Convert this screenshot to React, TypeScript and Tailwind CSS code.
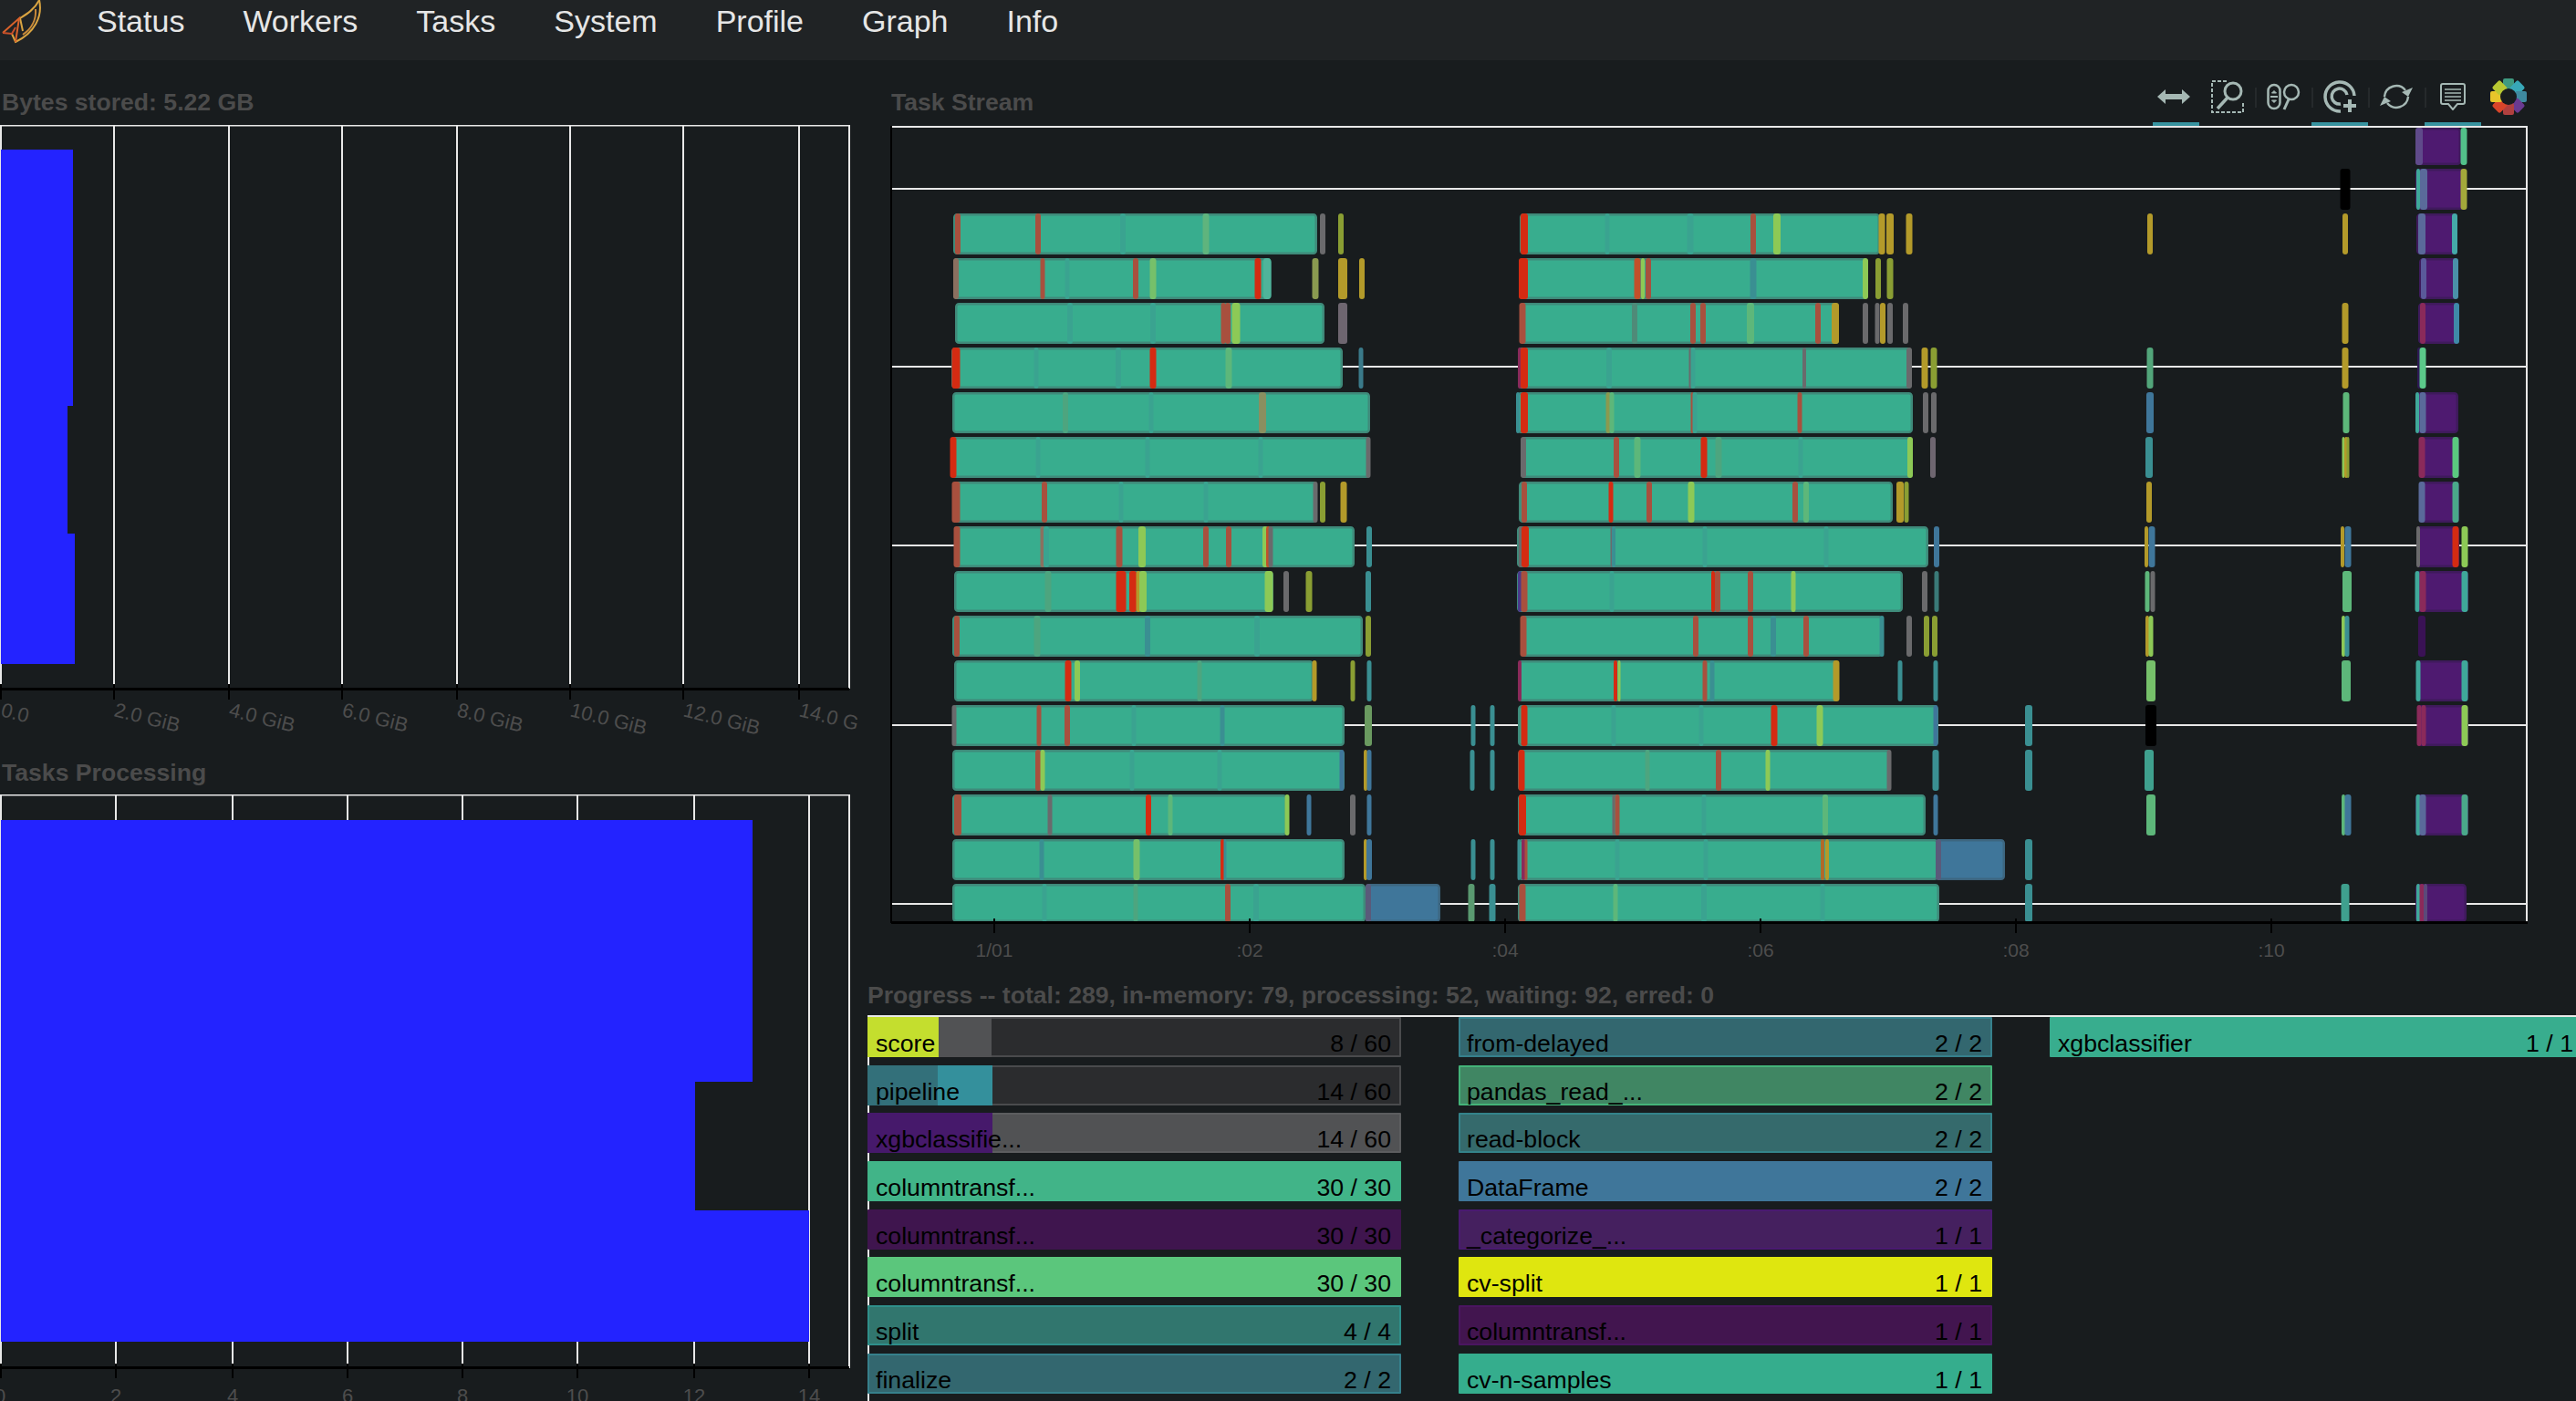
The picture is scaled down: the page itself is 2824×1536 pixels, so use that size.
import type { ReactNode } from 'react';

type Strip = [number, number, string];
type Bar = [number, number, string?];
type Row = { bars: Bar[]; strips: Strip[] };

const R = '#d42b12';
const M = '#a8503e';
const S = '#3aa390';
const T = '#3a8f92';
const G = '#5db77a';
const L = '#8dc956';
const Y = '#b39a2a';
const O = '#8a9e33';
const A = '#6a6a6c';
const B = '#3f769a';
const C = '#8a2a5a';
const V = '#5a6a9a';
const P = '#4e1a70';

const ROW_TOPS = Array.from({ length: 18 }, (_, i) => 136 + i * 49);

const rows: Row[] = [
  { bars: [[2648, 2698, P]], strips: [[2652, 8, '#5f4a8a'], [2701, 7, '#52c08a']] },
  { bars: [[2648, 2702, P]], strips: [[2571, 11, '#000000'], [2651, 4, '#3fa89a'], [2657, 8, V], [2701, 7, '#a3a83a']] },
  {
    bars: [[1045, 1444], [1666, 2061], [2649, 2693, P]],
    strips: [[1050, 6, M], [1138, 6, M], [1231, 6, S], [1322, 7, '#5fb47d'], [1450, 6, A], [1470, 6, O], [1671, 8, R], [1762, 5, S], [1853, 7, S], [1922, 6, M], [1948, 8, L], [2063, 7, Y], [2072, 8, Y], [2093, 7, Y], [2357, 6, Y], [2571, 6, Y], [2655, 8, V], [2691, 6, '#45a9a8']],
  },
  {
    bars: [[1045, 1394], [1665, 2048], [2652, 2695, P]],
    strips: [[1048, 6, '#8a7060'], [1143, 5, M], [1170, 5, S], [1245, 6, M], [1264, 7, '#76c06a'], [1379, 7, R], [1389, 8, '#4fb49a'], [1442, 7, '#8a9a50'], [1472, 10, Y], [1493, 6, Y], [1670, 10, R], [1795, 7, '#c2502a'], [1801, 4, L], [1807, 6, M], [1922, 7, T], [2045, 6, L], [2059, 6, O], [2072, 7, O], [2657, 6, '#5a5a9a'], [2692, 6, '#4a90a8']],
  },
  {
    bars: [[1047, 1452], [1666, 2016], [2651, 2696, P]],
    strips: [[1173, 6, S], [1264, 6, S], [1341, 5, M], [1346, 6, M], [1355, 9, L], [1472, 10, '#6e6670'], [1669, 7, M], [1792, 6, '#4f8a78'], [1856, 6, M], [1867, 6, M], [1919, 8, G], [1993, 6, M], [2012, 8, Y], [2045, 6, A], [2058, 5, A], [2064, 6, Y], [2072, 6, A], [2089, 6, A], [2571, 7, Y], [2656, 6, C], [2693, 6, '#3f8aa8']],
  },
  {
    bars: [[1043, 1472], [1664, 2096]],
    strips: [[1048, 9, R], [1136, 5, S], [1226, 6, S], [1264, 7, R], [1347, 7, G], [1492, 5, '#3a7a8a'], [1666, 4, C], [1671, 8, R], [1764, 6, S], [1853, 3, A], [1856, 5, S], [1978, 4, A], [2093, 6, A], [2110, 7, Y], [2120, 7, O], [2357, 7, '#52a57a'], [2571, 7, Y], [2652, 4, '#2e1a55'], [2656, 7, '#5bc98a']],
  },
  {
    bars: [[1044, 1502], [1663, 2097], [2648, 2695, P]],
    strips: [[1168, 6, '#4da57f'], [1262, 5, S], [1384, 8, '#8a8f60'], [1664, 4, T], [1671, 8, R], [1763, 5, '#8a9a50'], [1767, 5, G], [1855, 3, M], [1858, 5, S], [1973, 5, M], [2111, 6, A], [2120, 6, A], [2357, 8, B], [2572, 7, G], [2650, 4, '#3fa89a'], [2656, 7, V]],
  },
  {
    bars: [[1042, 1502], [1667, 2097], [2652, 2696, P]],
    strips: [[1045, 7, R], [1138, 5, S], [1258, 5, S], [1382, 5, S], [1500, 5, A], [1670, 6, A], [1772, 6, M], [1795, 7, G], [1868, 7, R], [1884, 7, '#4da57f'], [1974, 5, S], [2094, 6, L], [2119, 6, '#6e6670'], [2356, 8, T], [2569, 3, L], [2572, 4, Y], [2574, 3, O], [2655, 7, C], [2692, 7, '#5ac87f']],
  },
  {
    bars: [[1044, 1444], [1665, 2075], [2652, 2696, P]],
    strips: [[1048, 9, M], [1145, 6, M], [1229, 5, S], [1322, 5, S], [1442, 5, A], [1450, 6, O], [1473, 7, Y], [1671, 6, M], [1766, 5, R], [1808, 6, M], [1854, 7, L], [1968, 6, M], [1980, 6, G], [2083, 8, Y], [2090, 5, O], [2356, 6, Y], [2655, 7, V], [2692, 7, '#4aa88a']],
  },
  {
    bars: [[1046, 1485], [1663, 2114], [2649, 2696, P]],
    strips: [[1049, 7, M], [1143, 5, '#8a7060'], [1147, 6, S], [1227, 7, M], [1252, 8, L], [1322, 6, M], [1347, 6, M], [1387, 6, L], [1390, 4, '#c2502a'], [1393, 5, A], [1501, 6, T], [1667, 4, A], [1672, 8, R], [1767, 3, A], [1769, 4, T], [1869, 5, S], [2002, 5, S], [2123, 6, B], [2353, 4, Y], [2359, 7, B], [2568, 4, Y], [2574, 7, B], [2651, 4, A], [2692, 7, R], [2702, 7, L]],
  },
  {
    bars: [[1046, 1396], [1663, 2086], [2648, 2706, P]],
    strips: [[1149, 7, '#4da57f'], [1229, 11, R], [1242, 8, R], [1248, 5, Y], [1253, 8, L], [1391, 9, L], [1410, 6, A], [1435, 7, O], [1500, 6, T], [1666, 4, '#4a3a8a'], [1671, 7, M], [1767, 5, S], [1878, 4, R], [1883, 6, M], [1919, 6, M], [1966, 5, L], [2110, 6, A], [2123, 5, '#3a7a78'], [2354, 5, G], [2360, 5, A], [2573, 10, G], [2650, 5, '#3fa89a'], [2656, 7, C], [2702, 7, '#3fa89a']],
  },
  {
    bars: [[1044, 1494], [1667, 2064]],
    strips: [[1049, 6, M], [1137, 7, '#4da57f'], [1258, 6, T], [1378, 6, S], [1500, 6, O], [1670, 7, M], [1859, 6, M], [1919, 6, M], [1944, 6, T], [1980, 6, M], [2063, 5, T], [2093, 6, A], [2112, 6, O], [2121, 6, O], [2354, 4, Y], [2358, 5, L], [2569, 4, L], [2573, 5, T], [2655, 8, '#3a1255']],
  },
  {
    bars: [[1046, 1440], [1664, 2016], [2649, 2706, P]],
    strips: [[1171, 7, R], [1181, 6, L], [1315, 5, '#4da57f'], [1441, 5, Y], [1483, 5, O], [1501, 5, T], [1666, 4, C], [1771, 4, R], [1775, 3, L], [1869, 5, M], [1877, 5, T], [2013, 7, Y], [2083, 5, T], [2122, 5, T], [2358, 10, '#76c06a'], [2572, 10, G], [2651, 5, '#3fa89a'], [2702, 7, '#3fa89a']],
  },
  {
    bars: [[1044, 1474], [1664, 2125], [2650, 2706, P]],
    strips: [[1046, 5, A], [1139, 5, M], [1170, 6, M], [1243, 5, S], [1340, 5, T], [1500, 8, '#6a9a60'], [1615, 5, T], [1636, 5, T], [1671, 7, R], [1769, 5, S], [1865, 5, S], [1945, 7, R], [1995, 7, L], [2122, 5, B], [2224, 8, T], [2358, 12, '#000000'], [2652, 5, C], [2657, 5, C], [2702, 7, L]],
  },
  {
    bars: [[1044, 1474], [1664, 2073]],
    strips: [[1138, 6, M], [1143, 5, L], [1241, 5, S], [1337, 5, S], [1471, 5, B], [1497, 4, Y], [1501, 5, B], [1614, 5, T], [1636, 5, T], [1668, 7, R], [1806, 5, '#4da57f'], [1884, 6, M], [1938, 5, L], [2071, 5, A], [2122, 7, T], [2224, 8, T], [2356, 10, '#3fa08e']],
  },
  {
    bars: [[1044, 1411], [1664, 2111], [2648, 2706, P]],
    strips: [[1050, 8, M], [1151, 5, A], [1259, 6, R], [1283, 5, G], [1411, 5, L], [1435, 5, B], [1483, 6, A], [1501, 5, B], [1669, 8, R], [1769, 3, A], [1773, 5, M], [1868, 5, S], [2001, 6, G], [2122, 5, B], [2358, 10, G], [2569, 4, G], [2574, 7, B], [2651, 5, '#3fa89a'], [2656, 7, V], [2702, 7, '#4aa88a']],
  },
  {
    bars: [[1044, 1474], [1664, 2125], [2122, 2198, B]],
    strips: [[1142, 5, T], [1246, 7, '#76c06a'], [1340, 4, R], [1343, 3, T], [1497, 4, Y], [1501, 6, B], [1615, 5, T], [1636, 5, T], [1665, 3, T], [1670, 4, C], [1673, 3, M], [1773, 5, S], [1870, 5, S], [1998, 4, '#b06a2a'], [2003, 4, Y], [2125, 6, '#5a5a7a'], [2224, 8, T]],
  },
  {
    bars: [[1044, 1497], [1497, 1579, B], [1664, 2126], [2648, 2704, P]],
    strips: [[1145, 5, S], [1245, 5, '#4da57f'], [1346, 6, M], [1377, 6, S], [1500, 6, '#5a5a7a'], [1613, 7, '#5a9a70'], [1636, 7, T], [1669, 7, M], [1771, 5, G], [1868, 6, S], [1998, 5, S], [2224, 8, T], [2571, 9, '#3fa08e'], [2651, 4, '#3fa89a'], [2655, 5, C], [2659, 4, '#5a4a7a']],
  },
];

const strokeFor = (fill?: string) => {
  if (fill === P) return '#3f1a5c';
  if (fill === B) return '#3d6680';
  return '#3f8a7a';
};

function TaskStream() {
  const ticks = [1090, 1370, 1650, 1930, 2210, 2490];
  const labels = ['1/01', ':02', ':04', ':06', ':08', ':10'];
  return (
    <svg viewBox="951 137 1873 938" width={1873} height={938} className="block">
      <rect x={977} y={138} width={1794} height={2} fill="#e8e8e8" />
      {[207, 402, 598, 795, 991].map((y) => (
        <rect key={y} x={977} y={y - 1} width={1794} height={2} fill="#e8e8e8" />
      ))}
      <rect x={2769} y={138} width={2} height={873} fill="#e8e8e8" />
      {rows.map((row, i) => {
        const top = Math.max(140, ROW_TOPS[i]);
        const bottom = Math.min(1011, ROW_TOPS[i] + 45);
        return (
          <g key={i}>
            {row.bars.map(([x0, x1, fill], j) => (
              <rect
                key={j}
                x={x0 + 1.25}
                y={top + 1.25}
                width={x1 - x0 - 2.5}
                height={bottom - top - 2.5}
                rx={3}
                fill={fill ?? '#38ad8e'}
                stroke={strokeFor(fill)}
                strokeWidth={2.5}
              />
            ))}
            {row.strips.map(([x, w, color], j) => (
              <rect key={j} x={x - w / 2} y={top} width={w} height={bottom - top} rx={3} fill={color} />
            ))}
          </g>
        );
      })}
      <rect x={976} y={138} width={2} height={874} fill="#000000" />
      <rect x={977} y={1010} width={1794} height={3} fill="#000000" />
      {ticks.map((x, i) => (
        <g key={x}>
          <rect x={x - 1} y={1007} width={2} height={16} fill="#000000" />
          <text x={x} y={1049} fontSize={21} textAnchor="middle" fill="#4d4d4d">
            {labels[i]}
          </text>
        </g>
      ))}
    </svg>
  );
}

function BytesChart() {
  const ticks = [125, 251, 375, 501, 625, 749, 876];
  const labels = ['2.0 GiB', '4.0 GiB', '6.0 GiB', '8.0 GiB', '10.0 GiB', '12.0 GiB', '14.0 GiB'];
  return (
    <svg viewBox="0 137 940 694" width={940} height={694} className="block">
      <rect x={0} y={136} width={931} height={2.5} fill="#e8e8e8" />
      <rect x={930} y={136} width={2} height={619} fill="#e8e8e8" />
      <rect x={0} y={137} width={2} height={613} fill="#e8e8e8" />
      {ticks.map((x) => (
        <rect key={x} x={x - 1} y={137} width={2} height={613} fill="#e8e8e8" />
      ))}
      <rect x={1} y={164} width={79} height={281} fill="#2323ff" />
      <rect x={1} y={445} width={73} height={140} fill="#2323ff" />
      <rect x={1} y={585} width={81} height={143} fill="#2323ff" />
      <rect x={0} y={754} width={931} height={3} fill="#000000" />
      {[1, ...ticks].map((x) => (
        <rect key={x} x={x - 1} y={750} width={2} height={17} fill="#000000" />
      ))}
      <text transform="translate(0 785) rotate(14)" fontSize={22} fill="#4d4d4d">
        0.0
      </text>
      {ticks.map((x, i) => (
        <text key={x} transform={`translate(${x - 1} 785) rotate(14)`} fontSize={22} fill="#4d4d4d">
          {labels[i]}
        </text>
      ))}
    </svg>
  );
}

function TasksChart() {
  const ticks = [127, 255, 381, 507, 633, 761, 887];
  return (
    <svg viewBox="0 871 940 665" width={940} height={665} className="block">
      <rect x={0} y={870} width={931} height={2.5} fill="#e8e8e8" />
      <rect x={930} y={870} width={2} height={630} fill="#e8e8e8" />
      <rect x={0} y={871} width={2} height={624} fill="#e8e8e8" />
      {ticks.map((x) => (
        <rect key={x} x={x - 1} y={871} width={2} height={624} fill="#e8e8e8" />
      ))}
      <rect x={1} y={899} width={824} height={287} fill="#2323ff" />
      <rect x={1} y={1186} width={761} height={141} fill="#2323ff" />
      <rect x={1} y={1327} width={886} height={144} fill="#2323ff" />
      <rect x={0} y={1498} width={931} height={3} fill="#000000" />
      {[1, ...ticks].map((x) => (
        <rect key={x} x={x - 1} y={1495} width={2} height={16} fill="#000000" />
      ))}
      {[0, ...ticks].map((x, i) => (
        <text key={x} x={x} y={1538} fontSize={22} textAnchor="middle" fill="#4d4d4d">
          {i * 2}
        </text>
      ))}
    </svg>
  );
}

function DaskLogo() {
  return (
    <svg width={44} height={48} viewBox="0 0 44 48" fill="none" strokeWidth={2}>
      <path d="M41 0 C45 18 36 36 15 46 L11 37" stroke="#d9a441" />
      <path d="M41 0 C36 10 28 15 20 20 L23 34" stroke="#d9a441" />
      <path d="M37 10 C38 22 32 32 23 38" stroke="#c98a3a" />
      <path d="M1 36 L19 20 L15 46" stroke="#d9622b" />
      <path d="M1 36 L11 37 L15 30" stroke="#c9502a" />
    </svg>
  );
}

function PanIcon() {
  return (
    <svg width={36} height={16} viewBox="0 0 36 16" fill="#a5b8b4" className="-ml-1.5">
      <path d="M0 8 L9 0 V5 H27 V0 L36 8 L27 16 V11 H9 V16Z" />
    </svg>
  );
}

function BoxZoomIcon() {
  return (
    <svg width={36} height={36} viewBox="0 0 36 36" fill="none" stroke="#a5b8b4">
      <path d="M17 1 H1 V35 H35 V24" strokeWidth={2} strokeDasharray="4 2" />
      <circle cx={24} cy={12} r={9} strokeWidth={3} />
      <path d="M18 19 L7 31" strokeWidth={3.5} />
    </svg>
  );
}

function WheelZoomIcon() {
  return (
    <svg width={37} height={30} viewBox="0 0 37 30" fill="none" stroke="#a5b8b4" strokeWidth={2.5}>
      <rect x={1.5} y={2} width={13} height={26} rx={6.5} />
      <path d="M4 15 H12" strokeWidth={2} />
      <path d="M5.5 11 L8 8.5 L10.5 11 Z M5.5 19 L8 21.5 L10.5 19 Z" fill="#a5b8b4" strokeWidth={1} />
      <circle cx={27} cy={10} r={8} />
      <path d="M24 18 L19 29" strokeWidth={3} />
    </svg>
  );
}

function TapZoomIcon() {
  return (
    <svg width={36} height={36} viewBox="0 0 36 36" fill="none" stroke="#a5b8b4" strokeWidth={3.5}>
      <path d="M19 34 A16 16 0 1 1 34 17" />
      <path d="M19 26 A8.5 8.5 0 1 1 26 16" />
      <path d="M29 21 V35 M22 28 H36" strokeWidth={4} />
    </svg>
  );
}

function ResetIcon() {
  return (
    <svg width={36} height={30} viewBox="0 0 36 30" fill="none" stroke="#a5b8b4" strokeWidth={2.5}>
      <path d="M5 15 A13 13 0 0 1 28 8" />
      <path d="M31 15 A13 13 0 0 1 8 22" />
      <path d="M36 5 L31 15 L24 10 Z M0 25 L5 15 L12 20 Z" fill="#a5b8b4" stroke="none" />
    </svg>
  );
}

function HoverIcon() {
  return (
    <svg width={28} height={30} viewBox="0 0 28 30" fill="none" stroke="#a5b8b4" strokeWidth={2}>
      <path d="M3 1 H25 A2 2 0 0 1 27 3 V21 A2 2 0 0 1 25 23 H19 L14 29 L9 23 H3 A2 2 0 0 1 1 21 V3 A2 2 0 0 1 3 1 Z" />
      <path d="M5 7 H23 M5 11 H23 M5 15 H23 M5 19 H23" strokeWidth={1.5} />
    </svg>
  );
}

function BokehLogo() {
  const petals = ['#3f9a80', '#38a8b8', '#3f8aa0', '#6a3a90', '#b0403f', '#d8452a', '#e8c52a', '#b8c832'];
  return (
    <svg width={40} height={40} viewBox="-20 -20 40 40">
      {petals.map((color, i) => (
        <rect key={color} x={-6} y={-20} width={12} height={13} rx={2} fill={color} transform={`rotate(${i * 45})`} />
      ))}
      <circle r={9} fill="#181c1e" />
    </svg>
  );
}

function ToolButton({ width, active, sep, children }: { width: string; active?: boolean; sep?: boolean; children: ReactNode }) {
  return (
    <div className={`relative h-[72px] -mb-px pt-3 flex items-center justify-center border-b-4 ${width} ${active ? 'border-[#37939f]' : 'border-transparent'}`}>
      {sep && <span className="absolute left-0 top-[30px] w-0.5 h-[22px] bg-[#25292b]" />}
      {children}
    </div>
  );
}

const progress = [
  [
    { name: 'score', count: '8 / 60', bar: 'bg-[#2b2c2e] border-[#4a4b4d]', segs: [['w-[78px]', 'bg-[#c4de2e]', 'left-0'], ['w-[58px]', 'bg-[#515254]', 'left-[78px]']] },
    { name: 'pipeline', count: '14 / 60', bar: 'bg-[#2b2c2e] border-[#4a4b4d]', segs: [['w-[77px]', 'bg-[#33707a]', 'left-0'], ['w-[60px]', 'bg-[#34909c]', 'left-[77px]']] },
    { name: 'xgbclassifie...', count: '14 / 60', bar: 'bg-[#515254] border-[#5c5d5f]', segs: [['w-[137px]', 'bg-[#46196b]', 'left-0']] },
    { name: 'columntransf...', count: '30 / 30', bar: 'bg-[#41b488] border-[#41b488]' },
    { name: 'columntransf...', count: '30 / 30', bar: 'bg-[#3f154e] border-[#3f154e]' },
    { name: 'columntransf...', count: '30 / 30', bar: 'bg-[#5bc67c] border-[#5bc67c]' },
    { name: 'split', count: '4 / 4', bar: 'bg-[#31766e] border-[#2f8f8a]' },
    { name: 'finalize', count: '2 / 2', bar: 'bg-[#33676f] border-[#36808c]' },
  ],
  [
    { name: 'from-delayed', count: '2 / 2', bar: 'bg-[#33676f] border-[#36808c]' },
    { name: 'pandas_read_...', count: '2 / 2', bar: 'bg-[#408663] border-[#44b479]' },
    { name: 'read-block', count: '2 / 2', bar: 'bg-[#356a6c] border-[#34838a]' },
    { name: 'DataFrame', count: '2 / 2', bar: 'bg-[#3f769a] border-[#3f769a]' },
    { name: '_categorize_...', count: '1 / 1', bar: 'bg-[#45205f] border-[#4a1a70]' },
    { name: 'cv-split', count: '1 / 1', bar: 'bg-[#dfe60f] border-[#dfe60f]' },
    { name: 'columntransf...', count: '1 / 1', bar: 'bg-[#42154f] border-[#4a1560]' },
    { name: 'cv-n-samples', count: '1 / 1', bar: 'bg-[#35ad8d] border-[#35ad8d]' },
  ],
  [{ name: 'xgbclassifier', count: '1 / 1', bar: 'bg-[#38ad8e] border-[#38ad8e]' }],
];

function ProgressBar({ name, count, bar, segs }: { name: string; count: string; bar: string; segs?: string[][] }) {
  return (
    <div className={`relative h-11 rounded-[1px] border-2 ${bar}`}>
      {segs?.map(([w, bg, left]) => (
        <span key={left} className={`absolute -top-0.5 -bottom-0.5 -ml-0.5 ${w} ${bg} ${left}`} />
      ))}
      <div className="relative flex justify-between pt-[14px] pl-[7px] pr-[9px] text-[26.7px] leading-[26px] text-black">
        <span>{name}</span>
        <span>{count}</span>
      </div>
    </div>
  );
}

export default function App() {
  const nav = ['Status', 'Workers', 'Tasks', 'System', 'Profile', 'Graph', 'Info'];
  return (
    <div className="h-[1536px] overflow-hidden bg-[#181c1e] [font-family:'Liberation_Sans',sans-serif]">
      <nav className="h-[66px] flex bg-[#202325] overflow-hidden">
        <div className="w-[106px] pl-0.5">
          <DaskLogo />
        </div>
        <div className="flex gap-16 pt-1">
          {nav.map((item) => (
            <span key={item} className="text-[34px] leading-[38px] text-[#e6e6e6]">
              {item}
            </span>
          ))}
        </div>
      </nav>

      <main className="flex">
        {/* Left charts */}
        <div className="w-[951px] shrink-0">
          <h2 className="h-8 mt-[30px] mb-[9px] pl-0.5 text-[26.6px] leading-8 font-bold text-[#4b4b4b]">Bytes stored: 5.22 GB</h2>
          <BytesChart />
          <h2 className="h-8 mb-2 pl-0.5 text-[26.6px] leading-8 font-bold text-[#4b4b4b]">Tasks Processing</h2>
          <TasksChart />
        </div>

        {/* Task stream + progress */}
        <div className="flex-1 min-w-0">
          <div className="h-[71px] flex pl-[26px] pr-11">
            <h2 className="h-8 mt-[30px] text-[26.6px] leading-8 font-bold text-[#4b4b4b]">Task Stream</h2>
            <div className="ml-auto flex">
              <ToolButton width="w-[51px]" active>
                <PanIcon />
              </ToolButton>
              <ToolButton width="w-[61px]">
                <BoxZoomIcon />
              </ToolButton>
              <ToolButton width="w-[62px]" sep>
                <WheelZoomIcon />
              </ToolButton>
              <ToolButton width="w-[62px]" sep active>
                <TapZoomIcon />
              </ToolButton>
              <ToolButton width="w-[62px]" sep>
                <ResetIcon />
              </ToolButton>
              <ToolButton width="w-[62px]" sep active>
                <HoverIcon />
              </ToolButton>
              <ToolButton width="w-[60px]">
                <BokehLogo />
              </ToolButton>
            </div>
          </div>
          <TaskStream />
          <h2 className="h-8 mb-1.5 text-[26.6px] leading-8 font-bold text-[#4b4b4b]">Progress -- total: 289, in-memory: 79, processing: 52, waiting: 92, erred: 0</h2>
          <div className="w-[1900px] border-t-2 border-l-2 border-[#e8e8e8] h-[450px]">
            <div className="flex gap-x-[63px] -ml-0.5">
              {progress.map((col, i) => (
                <div key={i} className="w-[585px] flex flex-col gap-y-[8.7px]">
                  {col.map((p) => (
                    <ProgressBar key={p.name + p.bar} {...p} />
                  ))}
                </div>
              ))}
            </div>
          </div>
        </div>
      </main>
    </div>
  );
}
